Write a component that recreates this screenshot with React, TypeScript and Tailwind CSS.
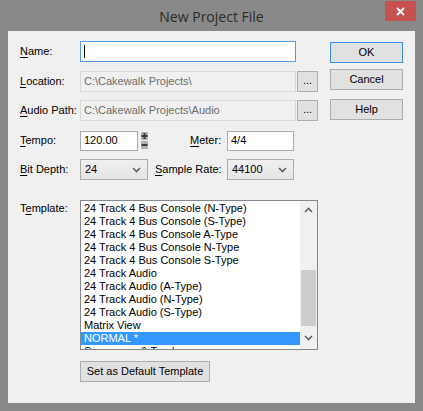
import type { ReactNode } from "react";

const FONT = "font-['Liberation_Sans',Arial,sans-serif]";

const TEMPLATES = [
  "24 Track 4 Bus Console (N-Type)",
  "24 Track 4 Bus Console (S-Type)",
  "24 Track 4 Bus Console A-Type",
  "24 Track 4 Bus Console N-Type",
  "24 Track 4 Bus Console S-Type",
  "24 Track Audio",
  "24 Track Audio (A-Type)",
  "24 Track Audio (N-Type)",
  "24 Track Audio (S-Type)",
  "Matrix View",
  "NORMAL *",
  "Sequencer & Tracks",
];

function Label({ k, rest, pre = "", className = "" }: { k: string; rest: string; pre?: string; className?: string }) {
  return (
    <span className={`text-[11px] text-black leading-none ${className}`}>
      {pre}
      <span className="underline underline-offset-[2px]">{k}</span>
      {rest}
    </span>
  );
}

function DlgButton({ children, primary = false, className = "" }: { children: ReactNode; primary?: boolean; className?: string }) {
  return (
    <div
      className={`flex items-center justify-center h-[21px] bg-[#e1e1e1] border text-[11px] text-black ${
        primary ? "border-[#3c8fe0]" : "border-[#adadad]"
      } ${className}`}
    >
      {children}
    </div>
  );
}

function Chevron() {
  return (
    <svg width="9" height="6" viewBox="0 0 9 6" className="text-[#606060]">
      <path d="M1 1 L4.5 4.5 L8 1" fill="none" stroke="currentColor" strokeWidth="1.6" />
    </svg>
  );
}

function Combo({ value, className = "" }: { value: string; className?: string }) {
  return (
    <div
      className={`flex items-center justify-between h-[21px] pl-[4px] pr-[6px] border border-[#acacac] bg-gradient-to-b from-[#f0f0f0] to-[#e5e5e5] text-[11px] text-black ${className}`}
    >
      <span>{value}</span>
      <Chevron />
    </div>
  );
}

export default function App() {
  return (
    <div className={`w-[423px] h-[411px] bg-[#898989] flex flex-col ${FONT}`}>
      {/* Title bar */}
      <div className="relative h-[31px] flex items-center justify-center">
        <span className="font-['Open_Sans',sans-serif] text-[14px] text-[#2b2b2b] pt-[1px]">New Project File</span>
        <div className="absolute top-[1px] right-[7px] w-[31px] h-[20px] bg-[#c75050] flex items-center justify-center">
          <svg width="9" height="9" viewBox="0 0 9 9">
            <path d="M1 1 L8 8 M8 1 L1 8" stroke="white" strokeWidth="1.8" />
          </svg>
        </div>
      </div>

      {/* Client area */}
      <div className="ml-[8px] w-[407px] h-[372px] bg-[#f0f0f0] flex pl-[12px] pt-[10px]">
        {/* Left form */}
        <div className="w-[298px] flex flex-col">
          <div className="flex items-center h-[21px]">
            <Label k="N" rest="ame:" className="w-[60px]" />
            <div className="w-[216px] h-[21px] bg-white border border-[#569de5] flex items-center pl-[3px]">
              <div className="w-px h-[13px] bg-black" />
            </div>
          </div>

          <div className="flex items-center h-[21px] mt-[9px]">
            <Label k="L" rest="ocation:" className="w-[60px]" />
            <div className="w-[216px] h-[21px] bg-[#f0f0f0] border border-[#d9d9d9] flex items-center pl-[3px] text-[11px] text-[#6d6d6d]">
              C:\Cakewalk Projects\
            </div>
            <DlgButton className="w-[21px] ml-[1px] pb-[3px]">...</DlgButton>
          </div>

          <div className="flex items-center h-[21px] mt-[8px]">
            <Label k="A" rest="udio Path:" className="w-[60px]" />
            <div className="w-[216px] h-[21px] bg-[#f0f0f0] border border-[#d9d9d9] flex items-center pl-[3px] text-[11px] text-[#6d6d6d]">
              C:\Cakewalk Projects\Audio
            </div>
            <DlgButton className="w-[21px] ml-[1px] pb-[3px]">...</DlgButton>
          </div>

          <div className="flex items-center h-[21px] mt-[9px]">
            <Label k="T" rest="empo:" className="w-[60px]" />
            <div className="w-[58px] h-[20px] bg-white border border-[#abadb3] flex items-center pl-[3px] text-[11px] text-black">
              120.00
            </div>
            <div className="ml-[3px] flex flex-col gap-[1px]">
              <svg width="7" height="8" viewBox="0 0 7 8">
                <rect width="7" height="8" rx="1" fill="#b0b0b0" />
                <path d="M3.5 1 V7 M0.5 4 H6.5" stroke="#3c3c3c" strokeWidth="2" />
              </svg>
              <svg width="7" height="8" viewBox="0 0 7 8">
                <rect width="7" height="8" rx="1" fill="#b0b0b0" />
                <path d="M0.5 4 H6.5" stroke="#3c3c3c" strokeWidth="2" />
              </svg>
            </div>
            <Label k="M" rest="eter:" className="ml-[42px] w-[37px]" />
            <div className="w-[67px] h-[20px] bg-white border border-[#abadb3] flex items-center pl-[3px] text-[11px] text-black">
              4/4
            </div>
          </div>

          <div className="flex items-center h-[21px] mt-[8px]">
            <Label k="B" rest="it Depth:" className="w-[60px]" />
            <Combo value="24" className="w-[68px]" />
            <Label k="S" rest="ample Rate:" className="ml-[7px] w-[72px]" />
            <Combo value="44100" className="w-[67px]" />
          </div>

          {/* Template list */}
          <div className="flex items-start mt-[20px]">
            <Label pre="T" k="e" rest="mplate:" className="w-[60px] pt-[3px]" />
            <div className="w-[238px] h-[150px] bg-white border border-[#828790] flex overflow-hidden">
              <div className="flex-1 flex flex-col pt-[1px] overflow-hidden">
                {TEMPLATES.map((t) => (
                  <div
                    key={t}
                    className={`h-[13px] shrink-0 pl-[3px] text-[11px] leading-[13px] whitespace-nowrap ${
                      t === "NORMAL *" ? "bg-[#3399ff] text-white" : "text-black"
                    }`}
                  >
                    {t}
                  </div>
                ))}
              </div>
              <div className="w-[17px] bg-[#f0f0f0] flex flex-col">
                <div className="h-[17px] flex items-center justify-center">
                  <svg width="9" height="6" viewBox="0 0 9 6">
                    <path d="M1 5 L4.5 1.5 L8 5" fill="none" stroke="#606060" strokeWidth="1.6" />
                  </svg>
                </div>
                <div className="h-[52px]" />
                <div className="h-[56px] mx-[1px] bg-[#cdcdcd]" />
                <div className="flex-1 flex items-center justify-center">
                  <Chevron />
                </div>
              </div>
            </div>
          </div>

          <div className="flex mt-[11px] pl-[60px]">
            <DlgButton className="w-[130px]">Set as Default Template</DlgButton>
          </div>
        </div>

        {/* Right buttons */}
        <div className="ml-[12px] w-[73px] flex flex-col pt-[1px]">
          <DlgButton primary>OK</DlgButton>
          <DlgButton className="mt-[6px]">Cancel</DlgButton>
          <DlgButton className="mt-[9px]">Help</DlgButton>
        </div>
      </div>
    </div>
  );
}
